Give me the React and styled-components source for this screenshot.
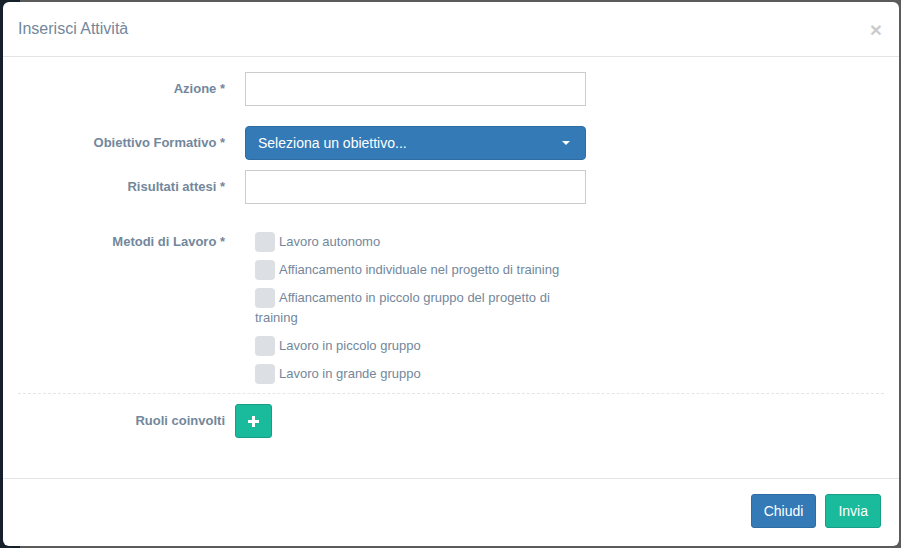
import styled, { createGlobalStyle } from "styled-components";

const GlobalStyle = createGlobalStyle`
  html, body {
    margin: 0;
    padding: 0;
  }
  body {
    background: linear-gradient(to right, #15202b 0 20px, #5b5b5b 20px);
    font-family: "Liberation Sans", Arial, sans-serif;
    font-size: 13px;
    color: #73879c;
  }
`;

const Backdrop = styled.div`
  width: 901px;
  height: 548px;
  padding: 2px 2px 2px 3px;
  box-sizing: border-box;
`;

const Modal = styled.div`
  width: 896px;
  height: 544px;
  background: #fff;
  border-radius: 6px;
  display: flex;
  flex-direction: column;
  overflow: hidden;
`;

const Header = styled.div`
  height: 54px;
  padding: 0 15px 0 15px;
  border-bottom: 1px solid #e5e5e5;
  display: flex;
  align-items: center;
  justify-content: space-between;
`;

const Title = styled.h4`
  margin: 0;
  font-size: 16px;
  font-weight: 400;
  color: #73879c;
`;

const Close = styled.button`
  border: 0;
  background: none;
  padding: 0;
  margin-right: 2px;
  font-family: "Liberation Sans", Arial, sans-serif;
  font-size: 21px;
  font-weight: 700;
  line-height: 1;
  color: #000;
  opacity: 0.2;
  cursor: pointer;
`;

const Body = styled.div`
  flex: 1;
  padding: 15px 15px 0;
`;

const Row = styled.div`
  display: grid;
  grid-template-columns: 207px ${(p) => p.$field || "341px"};
  column-gap: ${(p) => p.$gap || "20px"};
  margin-top: ${(p) => p.$top || "0px"};
  align-items: start;
`;

const Label = styled.label`
  text-align: right;
  font-weight: 700;
  font-size: 13px;
  color: #73879c;
  line-height: 20px;
  padding-top: 7px;
`;

const Input = styled.input`
  height: 34px;
  box-sizing: border-box;
  width: 100%;
  border: 1px solid #ccc;
  border-radius: 0;
  padding: 6px 12px;
  font-family: inherit;
  font-size: 14px;
  outline: none;
`;

const Select = styled.button`
  height: 34px;
  width: 100%;
  box-sizing: border-box;
  background: #337ab7;
  border: 1px solid #2e6da4;
  border-radius: 4px;
  color: #fff;
  font-family: "Liberation Sans", Arial, sans-serif;
  font-size: 14px;
  padding: 0 12px;
  display: flex;
  align-items: center;
  justify-content: space-between;
  text-align: left;
`;

const Caret = styled.span`
  width: 0;
  height: 0;
  border-left: 4px solid transparent;
  border-right: 4px solid transparent;
  border-top: 4px solid #fff;
  margin-right: 3px;
`;

const CheckList = styled.div`
  padding: 7px 0 0 10px;
`;

const CheckItem = styled.div`
  font-size: 13px;
  line-height: 20px;
  color: #73879c;
  margin-bottom: 8px;
  padding-right: 20px;
`;

const Box = styled.span`
  display: inline-block;
  width: 20px;
  height: 20px;
  border-radius: 4px;
  background: #dcdfe3;
  vertical-align: -6px;
  margin-right: 4px;
`;

const Divider = styled.div`
  border-top: 1px dashed #e5e5e5;
  margin: 1px 0 10px;
`;

const AddButton = styled.button`
  width: 37px;
  height: 34px;
  background: #1abb9c;
  border: 1px solid #169f85;
  border-radius: 3px;
  display: flex;
  align-items: center;
  justify-content: center;
  padding: 0;
`;

const Footer = styled.div`
  border-top: 1px solid #e5e5e5;
  padding: 15px 18px 18px;
  display: flex;
  justify-content: flex-end;
  gap: 9px;
`;

const Button = styled.button`
  height: 34px;
  padding: 0 12px;
  border-radius: 3px;
  font-family: "Liberation Sans", Arial, sans-serif;
  font-size: 14px;
  color: #fff;
  background: ${(p) => (p.$variant === "success" ? "#1abb9c" : "#337ab7")};
  border: 1px solid ${(p) => (p.$variant === "success" ? "#169f85" : "#2e6da4")};
`;

const methods = [
  "Lavoro autonomo",
  "Affiancamento individuale nel progetto di training",
  "Affiancamento in piccolo gruppo del progetto di training",
  "Lavoro in piccolo gruppo",
  "Lavoro in grande gruppo",
];

const App = () => {
  return (
    <>
      <GlobalStyle />
      <Backdrop>
        <Modal>
          <Header>
            <Title>Inserisci Attività</Title>
            <Close>×</Close>
          </Header>
          <Body>
            <Row>
              <Label>Azione *</Label>
              <Input type="text" />
            </Row>
            <Row $top="20px">
              <Label>Obiettivo Formativo *</Label>
              <Select>
                <span>Seleziona un obiettivo...</span>
                <Caret />
              </Select>
            </Row>
            <Row $top="10px">
              <Label>Risultati attesi *</Label>
              <Input type="text" />
            </Row>
            <Row $top="21px">
              <Label>Metodi di Lavoro *</Label>
              <CheckList>
                {methods.map((m) => (
                  <CheckItem key={m}>
                    <Box />
                    {m}
                  </CheckItem>
                ))}
              </CheckList>
            </Row>
            <Divider />
            <Row $gap="10px" $field="37px">
              <Label>Ruoli coinvolti</Label>
              <AddButton>
                <svg width="11" height="11" viewBox="0 0 11 11">
                  <path d="M4 0h3v4h4v3H7v4H4V7H0V4h4z" fill="#fff" />
                </svg>
              </AddButton>
            </Row>
          </Body>
          <Footer>
            <Button>Chiudi</Button>
            <Button $variant="success">Invia</Button>
          </Footer>
        </Modal>
      </Backdrop>
    </>
  );
};

export default App;
